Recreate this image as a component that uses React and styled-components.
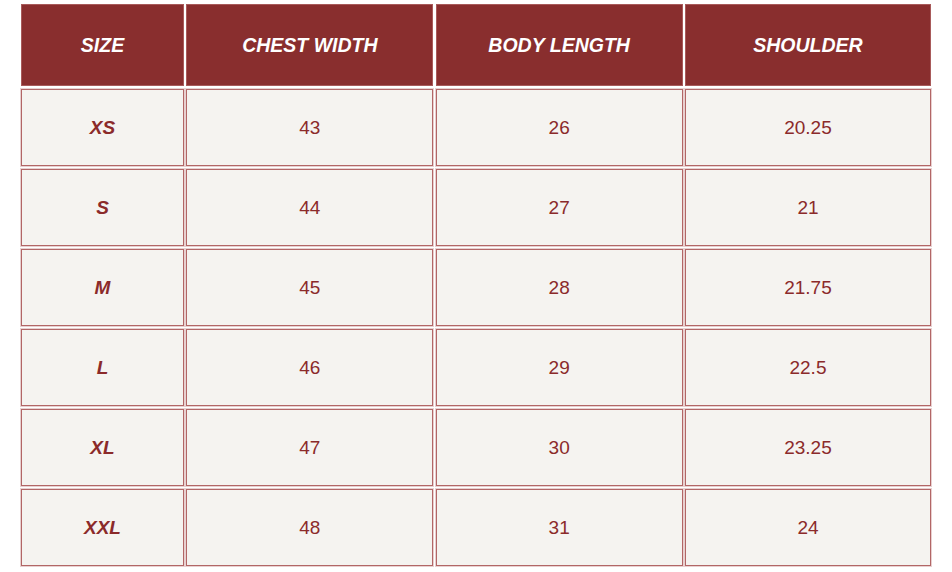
import React from "react";
import styled, { createGlobalStyle } from "styled-components";

const Global = createGlobalStyle`
  html, body { margin: 0; padding: 0; background: #ffffff; }
  body { font-family: "Liberation Sans", Arial, sans-serif; }
`;

const Page = styled.div`
  padding: 4px 21px 6px 21px;
`;

const Grid = styled.div`
  display: grid;
  grid-template-columns: 163px 247px 247px 246px;
  grid-template-rows: 82px repeat(6, 77px);
  column-gap: 2px;
  row-gap: 3px;
  justify-content: space-between;
`;

const HeadCell = styled.div`
  display: flex;
  align-items: center;
  justify-content: center;
  padding-top: 1px;
  background: #892e2e;
  border: 1px solid #a85a5a;
  box-sizing: border-box;
  color: #ffffff;
  font-weight: 700;
  font-style: italic;
  font-size: 19.5px;
`;

const Cell = styled.div`
  display: flex;
  align-items: center;
  justify-content: center;
  background: #f5f3f0;
  border: 1px solid #b26666;
  box-shadow: 0 0 0 1px rgba(190, 120, 120, 0.35);
  box-sizing: border-box;
  color: #8b2a2a;
  font-size: 19px;
  font-weight: ${(p) => (p.$size ? 700 : 400)};
  font-style: ${(p) => (p.$size ? "italic" : "normal")};
`;

const headers = ["SIZE", "CHEST WIDTH", "BODY LENGTH", "SHOULDER"];
const rows = [
  ["XS", "43", "26", "20.25"],
  ["S", "44", "27", "21"],
  ["M", "45", "28", "21.75"],
  ["L", "46", "29", "22.5"],
  ["XL", "47", "30", "23.25"],
  ["XXL", "48", "31", "24"],
];

export default function App() {
  return (
    <>
      <Global />
      <Page>
        <Grid>
          {headers.map((h) => (
            <HeadCell key={h}>{h}</HeadCell>
          ))}
          {rows.map((r) =>
            r.map((v, i) => (
              <Cell key={r[0] + i} $size={i === 0}>
                {v}
              </Cell>
            ))
          )}
        </Grid>
      </Page>
    </>
  );
}
